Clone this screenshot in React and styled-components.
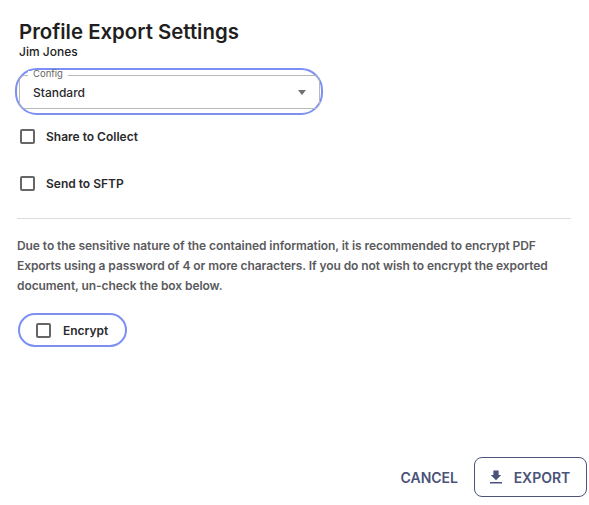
import React from "react";
import styled, { createGlobalStyle } from "styled-components";

const GlobalStyle = createGlobalStyle`
  html, body {
    margin: 0;
    padding: 0;
    background: #fff;
    font-family: Inter, "Liberation Sans", sans-serif;
  }
`;

const Page = styled.div`
  width: 589px;
  height: 505px;
  box-sizing: border-box;
  padding: 20px 18px 8px 19px;
  display: flex;
  flex-direction: column;
  overflow: hidden;
`;

const Title = styled.h1`
  margin: 0;
  font-size: 20.4px;
  line-height: 24px;
  font-weight: 600;
  color: #1f1f21;
`;

const Subtitle = styled.div`
  font-size: 12px;
  line-height: 16px;
  font-weight: 500;
  color: #222;
`;

const Ring = styled.div`
  margin: 8px 0 0 -4px;
  width: 308px;
  height: 47px;
  box-sizing: border-box;
  padding: 5px 1px 4px 2px;
  border: 2px solid #7b8ff5;
  border-radius: 22px;
`;

const SelectBox = styled.div`
  position: relative;
  height: 34px;
  box-sizing: border-box;
  border: 1px solid #b9b9b9;
  border-radius: 6px;
  display: flex;
  align-items: center;
  justify-content: space-between;
  padding: 0 14px 0 13px;
`;

const FloatLabel = styled.span`
  position: absolute;
  top: -5px;
  left: 8px;
  padding: 0 5px;
  background: #fff;
  font-size: 9.5px;
  line-height: 6px;
  color: #666;
`;

const SelectValue = styled.span`
  font-size: 12px;
  font-weight: 500;
  color: #2a2a2c;
`;

const Caret = styled.span`
  width: 0;
  height: 0;
  margin-right: -1px;
  border-left: 4.5px solid transparent;
  border-right: 4.5px solid transparent;
  border-top: 5px solid #707070;
`;

const CheckRow = styled.label`
  display: flex;
  align-items: center;
  gap: 11px;
  height: 16px;
  margin-top: ${(p) => p.$top}px;
  margin-left: 1px;
  font-size: 12px;
  font-weight: 600;
  color: #2a2a2c;
`;

const Box = styled.span`
  width: 15px;
  height: 15px;
  box-sizing: border-box;
  border: 2px solid #666;
  border-radius: 2px;
  flex: none;
`;

const Divider = styled.hr`
  margin: 27px 0 0 -2px;
  border: 0;
  border-top: 1px solid #dcdcdc;
`;

const Notice = styled.p`
  margin: 17px 0 0 -2px;
  font-size: 12px;
  line-height: 20px;
  font-weight: 600;
  letter-spacing: -0.07px;
  color: #5a5a5e;
`;

const EncryptPill = styled.label`
  margin: 17px 0 0 -1px;
  width: 109px;
  height: 34px;
  box-sizing: border-box;
  padding-left: 16px;
  display: flex;
  align-items: center;
  gap: 12px;
  border: 2px solid #7b8ff5;
  border-radius: 17px;
  font-size: 12px;
  font-weight: 600;
  color: #2a2a2c;
`;

const Footer = styled.div`
  margin-top: auto;
  margin-right: -16px;
  display: flex;
  align-items: center;
  justify-content: flex-end;
  gap: 16px;
`;

const CancelButton = styled.button`
  border: 0;
  background: none;
  padding: 0;
  font: 600 14px Inter, sans-serif;
  color: #4a5378;
`;

const ExportButton = styled.button`
  width: 113px;
  height: 40px;
  padding: 0 2px 0 0;
  display: flex;
  align-items: center;
  justify-content: center;
  gap: 11px;
  background: #fff;
  border: 1px solid #4a5378;
  border-radius: 8px;
  font: 600 14px Inter, sans-serif;
  color: #4a5378;
`;

export default function App() {
  return (
    <Page>
      <GlobalStyle />
      <Title>Profile Export Settings</Title>
      <Subtitle>Jim Jones</Subtitle>
      <Ring>
        <SelectBox>
          <FloatLabel>Config</FloatLabel>
          <SelectValue>Standard</SelectValue>
          <Caret />
        </SelectBox>
      </Ring>
      <CheckRow $top={13}>
        <Box />
        Share to Collect
      </CheckRow>
      <CheckRow $top={31}>
        <Box />
        Send to SFTP
      </CheckRow>
      <Divider />
      <Notice>
        Due to the sensitive nature of the contained information, it is
        recommended to encrypt PDF Exports using a password of 4 or more
        characters. If you do not wish to encrypt the exported document,
        un-check the box below.
      </Notice>
      <EncryptPill>
        <Box />
        Encrypt
      </EncryptPill>
      <Footer>
        <CancelButton>CANCEL</CancelButton>
        <ExportButton>
          <svg width="14" height="14" viewBox="0 0 14 14" fill="#4a5378">
            <path d="M4.4 0.4h5.2v4.6h2.6L7 10.2 1.8 5h2.6z" />
            <rect x="1" y="12" width="12" height="1.5" />
          </svg>
          EXPORT
        </ExportButton>
      </Footer>
    </Page>
  );
}
